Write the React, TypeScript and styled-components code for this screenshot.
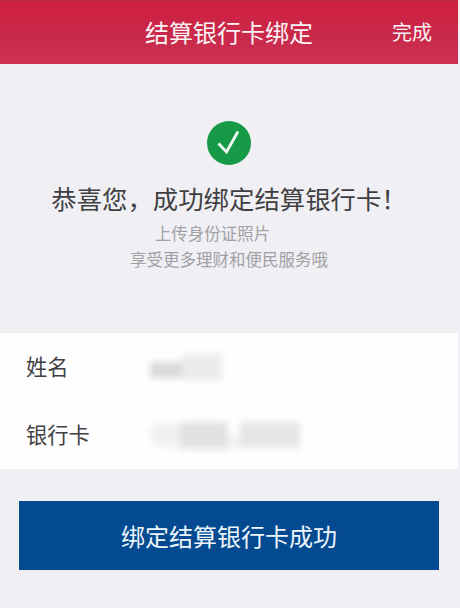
import React from 'react';
import styled, { createGlobalStyle } from 'styled-components';

const GlobalStyle = createGlobalStyle`
  html, body {
    margin: 0;
    padding: 0;
    background: #f0eff4;
  }
  body {
    font-family: "Liberation Sans", "Noto Sans CJK SC", sans-serif;
  }
`;

const Page = styled.div`
  width: 458px;
  height: 608px;
  overflow: hidden;
  display: flex;
  flex-direction: column;
`;

const Header = styled.header`
  height: 63px;
  border-top: 1px solid #b52a48;
  box-sizing: content-box;
  display: flex;
  align-items: center;
  padding: 0 26px 0 145px;
  justify-content: space-between;
  background: linear-gradient(#cf1f40 0%, #c92a4b 60%, #cd3252 100%);
  color: #fbf3f5;
`;

const Title = styled.div`
  font-size: 24px;
  line-height: 30px;
  margin-top: 2px;
`;

const Done = styled.div`
  font-size: 20px;
  line-height: 26px;
  margin-top: 1px;
`;

const Result = styled.section`
  display: flex;
  flex-direction: column;
  align-items: center;
  padding-top: 57px;
  height: 269px;
  box-sizing: border-box;
`;

const CheckCircle = styled.svg`
  width: 44px;
  height: 44px;
  display: block;
`;

const Heading = styled.h1`
  margin: 16px 0 0;
  font-family: "Noto Sans CJK SC", sans-serif;
  font-size: 25.4px;
  line-height: 34px;
  font-weight: 400;
  color: #3f3f42;
  white-space: nowrap;
`;

const Hint = styled.p<{ $shift?: number }>`
  margin: 0;
  font-size: 16.5px;
  line-height: 26px;
  color: #a1a1a4;
  white-space: nowrap;
  padding-right: ${({ $shift }) => $shift ?? 0}px;
`;

const Hints = styled.div`
  margin-top: 6px;
  display: flex;
  flex-direction: column;
  align-items: center;
`;

const Panel = styled.section`
  background: #fefefe;
  height: 136px;
  display: flex;
  flex-direction: column;
`;

const Row = styled.div`
  height: 68px;
  display: flex;
  align-items: center;
  padding-left: 26px;
`;

const Label = styled.div`
  width: 124px;
  flex: none;
  font-size: 21.3px;
  line-height: 28px;
  margin-top: 2px;
  color: #414144;
`;

const Smudge = styled.div`
  display: flex;
  align-items: center;
  filter: blur(3px);
`;

const SmudgeBit = styled.div<{ $w: number; $h: number; $c: string; $round?: boolean; $drop?: number }>`
  width: ${({ $w }) => $w}px;
  height: ${({ $h }) => $h}px;
  background: ${({ $c }) => $c};
  border-radius: ${({ $round }) => ($round ? '12px 0 0 12px' : '0')};
  margin-top: ${({ $drop }) => $drop ?? 0}px;
`;

const Footer = styled.div`
  padding: 32px 19px 0;
`;

const SubmitButton = styled.button`
  width: 420px;
  height: 69px;
  display: block;
  border: 0;
  padding: 0;
  background: #034a90;
  color: #eef6fc;
  font-family: inherit;
  font-size: 24px;
`;

export default function App() {
  return (
    <Page>
      <GlobalStyle />
      <Header>
        <Title>结算银行卡绑定</Title>
        <Done>完成</Done>
      </Header>
      <Result>
        <CheckCircle viewBox="0 0 44 44">
          <circle cx="22" cy="22" r="22" fill="#169a48" />
          <path d="M11.5 22.5 L19.5 31 L31 10.5" fill="none" stroke="#f1fbf4" strokeWidth="2.8" />
        </CheckCircle>
        <Heading lang="zh-CN">{'恭喜您\uFF0C成功绑定结算银行卡\uFF01'}</Heading>
        <Hints>
          <Hint $shift={33}>上传身份证照片</Hint>
          <Hint>享受更多理财和便民服务哦</Hint>
        </Hints>
      </Result>
      <Panel>
        <Row>
          <Label>姓名</Label>
          <Smudge>
            <SmudgeBit $w={32} $h={16} $c="#dadadc" $drop={6} />
            <SmudgeBit $w={40} $h={26} $c="#ebebed" />
          </Smudge>
        </Row>
        <Row>
          <Label>银行卡</Label>
          <Smudge>
            <SmudgeBit $w={30} $h={24} $c="#f0f0f2" $round />
            <SmudgeBit $w={48} $h={27} $c="#e2e2e4" />
            <SmudgeBit $w={12} $h={14} $c="#f2f2f3" $drop={13} />
            <SmudgeBit $w={60} $h={26} $c="#e6e6e8" />
          </Smudge>
        </Row>
      </Panel>
      <Footer>
        <SubmitButton>绑定结算银行卡成功</SubmitButton>
      </Footer>
    </Page>
  );
}
